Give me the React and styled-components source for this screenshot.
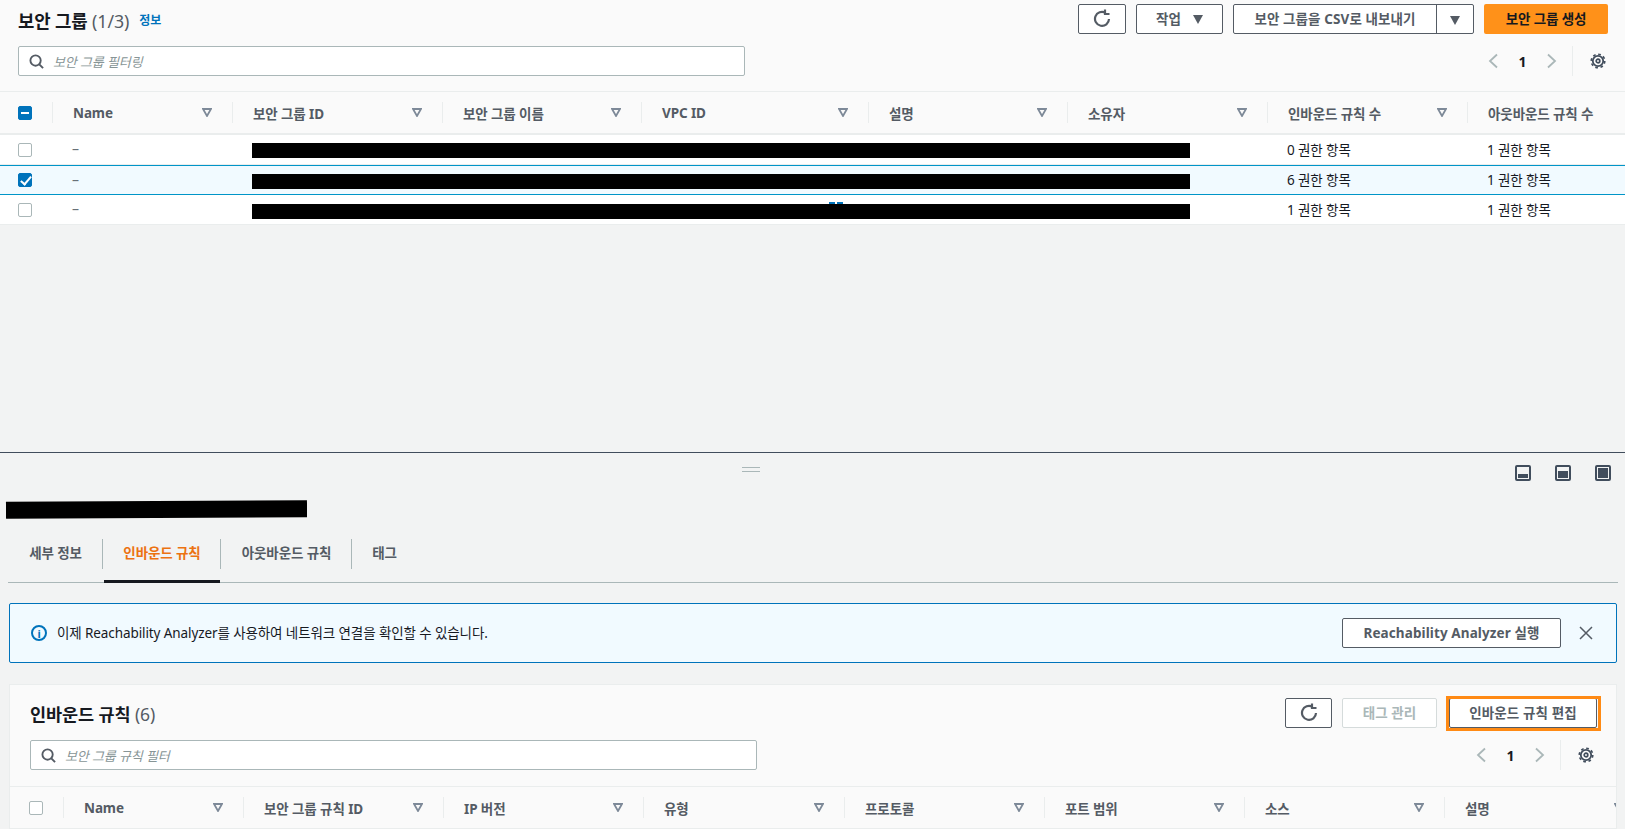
import React from 'react';
import styled, { createGlobalStyle } from 'styled-components';

const GlobalStyle = createGlobalStyle`
  html, body {
    margin: 0;
    padding: 0;
    height: 100%;
    overflow: hidden;
    background: #f2f3f3;
  }
  body {
    font-family: "Noto Sans", "Noto Sans CJK KR", sans-serif;
    font-size: 13.5px;
    letter-spacing: -0.1px;
    color: #16191f;
  }
  * { box-sizing: border-box; }
`;

const topColumns = '52px 180px 210px 199px 227px 199px 200px 200px 220px';
const bottomColumns = '53px 180px 200px 200px 201px 200px 200px 200px 200px';

const topHeads = ['Name', '보안 그룹 ID', '보안 그룹 이름', 'VPC ID', '설명', '소유자', '인바운드 규칙 수', '아웃바운드 규칙 수'];
const bottomHeads = ['Name', '보안 그룹 규칙 ID', 'IP 버전', '유형', '프로토콜', '포트 범위', '소스', '설명'];
const rows = [
  { id: 1, inbound: '0 권한 항목', outbound: '1 권한 항목' },
  { id: 2, inbound: '6 권한 항목', outbound: '1 권한 항목', selected: true },
  { id: 3, inbound: '1 권한 항목', outbound: '1 권한 항목', peek: true },
];

const SearchIcon = () => (
  <svg width="15" height="15" viewBox="0 0 16 16" fill="none" stroke="#545b64" strokeWidth="2">
    <circle cx="7" cy="7" r="5.5" />
    <path d="M11 11l4 4" />
  </svg>
);

const RefreshIcon = () => (
  <svg width="18" height="18" viewBox="0 0 18 18" fill="none" stroke="#545b64" strokeWidth="2.200">
    <path d="M16 10A7 7 0 1 1 12.500 3.800" />
    <path d="M12 0.500v4.500h4.500" />
  </svg>
);

const GearIcon = () => (
  <svg width="16" height="16" viewBox="0 0 16 16" fill="none" stroke="#414d5c">
    <circle cx="8" cy="8" r="5.200" strokeWidth="1.800" />
    <circle cx="8" cy="8" r="6.800" strokeWidth="1.600" strokeDasharray="2.700 2.640" />
    <circle cx="8" cy="8" r="1.800" strokeWidth="1.700" />
  </svg>
);

const Chevron = ({ left }) => (
  <svg width="10" height="16" viewBox="0 0 10 16" fill="none" stroke="#aab7b8" strokeWidth="1.800">
    <path d={left ? 'M9 1.500L2 8l7 6.500' : 'M1 1.500L8 8l-7 6.500'} />
  </svg>
);

const SortCaret = () => (
  <svg width="10" height="9" viewBox="0 0 10 9" fill="none" stroke="#7d8998" strokeWidth="1.800">
    <path d="M1 1h8L5 8z" />
  </svg>
);

const PaneIcon = ({ fill }) => (
  <svg width="16" height="16" viewBox="0 0 16 16">
    <rect x="1" y="1" width="14" height="14" rx="1" fill="none" stroke="#414d5c" strokeWidth="2" />
    <rect x="3" y={16 - 3 - fill} width="10" height={fill} fill="#414d5c" />
  </svg>
);

const Pagination = () => (
  <PagerWrap>
    <Chevron left />
    <PageNumber>1</PageNumber>
    <Chevron />
    <PagerDivider />
    <GearIcon />
  </PagerWrap>
);

const TableHead = ({ columns, heads, inset, checked }) => (
  <HeadRow $columns={columns}>
    <CheckCell $inset={inset}>
      <CheckBox $state={checked} />
    </CheckCell>
    {heads.map((head) => (
      <HeadCell key={head}>
        <span>{head}</span>
        <SortCaret />
      </HeadCell>
    ))}
  </HeadRow>
);

const App = () => {
  return (
    <Page>
      <GlobalStyle />
      <TopPane>
        <Header>
          <HeadingRow>
            <Title>
              보안 그룹 <Count>(1/3)</Count>
            </Title>
            <InfoLink>정보</InfoLink>
            <Actions>
              <Button $width={48}><RefreshIcon /></Button>
              <Button $width={87}>작업 <Caret /></Button>
              <SplitButton>
                <SplitLabel>보안 그룹을 CSV로 내보내기</SplitLabel>
                <SplitArrow><Caret /></SplitArrow>
              </SplitButton>
              <PrimaryButton>보안 그룹 생성</PrimaryButton>
            </Actions>
          </HeadingRow>
          <FilterRow $right={2}>
            <SearchBox $width={727}>
              <SearchIcon />
              <Placeholder>보안 그룹 필터링</Placeholder>
            </SearchBox>
            <Pagination />
          </FilterRow>
        </Header>
        <TableHead columns={topColumns} heads={topHeads} checked="mixed" />
        {rows.map((row) => (
          <Row key={row.id} $selected={row.selected}>
            <CheckCell>
              <CheckBox $state={row.selected ? 'checked' : 'empty'} />
            </CheckCell>
            <NameCell>–</NameCell>
            <Redacted $peek={row.peek} />
            <DataCell>{row.inbound}</DataCell>
            <DataCell>{row.outbound}</DataCell>
          </Row>
        ))}
      </TopPane>

      <BottomPane>
        <PaneBar>
          <DragHandle />
          <PaneIcons>
            <PaneIcon fill={4} />
            <PaneIcon fill={7} />
            <PaneIcon fill={10} />
          </PaneIcons>
        </PaneBar>
        <DetailTitle />
        <Tabs>
          <Tab $width={95}>세부 정보</Tab>
          <Tab $width={118} $active>인바운드 규칙</Tab>
          <Tab $width={131}>아웃바운드 규칙</Tab>
          <Tab $width={64} $last>태그</Tab>
        </Tabs>
        <Alert>
          <AlertIcon>i</AlertIcon>
          <AlertText>이제 Reachability Analyzer를 사용하여 네트워크 연결을 확인할 수 있습니다.</AlertText>
          <Button $width={219}>Reachability Analyzer 실행</Button>
          <CloseIcon viewBox="0 0 14 14">
            <path d="M1 1l12 12M13 1L1 13" />
          </CloseIcon>
        </Alert>
        <RulesPanel>
          <RulesHeader>
            <RulesHeading>
              <RulesTitle>
                인바운드 규칙 <Count>(6)</Count>
              </RulesTitle>
              <RulesActions>
                <Button $width={47}><RefreshIcon /></Button>
                <Button $width={95} $disabled>태그 관리</Button>
                <Highlight>
                  <Button $width={148}>인바운드 규칙 편집</Button>
                </Highlight>
              </RulesActions>
            </RulesHeading>
            <FilterRow $right={7}>
              <SearchBox $width={727}>
                <SearchIcon />
                <Placeholder>보안 그룹 규칙 필터</Placeholder>
              </SearchBox>
              <Pagination />
            </FilterRow>
          </RulesHeader>
          <TableHead columns={bottomColumns} heads={bottomHeads} checked="empty" inset />
        </RulesPanel>
      </BottomPane>
    </Page>
  );
};

export default App;

const Page = styled.div`
  width: 1625px;
  height: 829px;
  overflow: hidden;
  background: #f2f3f3;
`;

const TopPane = styled.section`
  height: 453px;
  border-bottom: 1px solid #414d5c;
`;

const Header = styled.div`
  height: 91px;
  padding: 4px 17px 0 18px;
  background: #fafafa;
`;

const HeadingRow = styled.div`
  display: flex;
  align-items: flex-start;
  height: 42px;
`;

const Title = styled.h1`
  margin: 5px 0 0;
  font-size: 17.8px;
  line-height: 24px;
  font-weight: 700;
`;

const Count = styled.span`
  font-weight: 400;
  color: #545b64;
`;

const InfoLink = styled.a`
  margin: 9px 0 0 10px;
  font-size: 12px;
  line-height: 16px;
  font-weight: 700;
  color: #0073bb;
`;

const Actions = styled.div`
  display: flex;
  gap: 10px;
  margin-left: auto;
`;

const Button = styled.button`
  display: inline-flex;
  align-items: center;
  justify-content: center;
  gap: 12px;
  width: ${({ $width }) => $width}px;
  height: 30px;
  padding: 0 0 2px;
  flex: none;
  background: #fff;
  border: 1px solid ${({ $disabled }) => ($disabled ? '#d5dbdb' : '#545b64')};
  border-radius: 2px;
  font-family: inherit;
  font-size: 13.5px;
  letter-spacing: 0.1px;
  font-weight: 700;
  color: ${({ $disabled }) => ($disabled ? '#aab7b8' : '#545b64')};
`;

const Caret = styled.i`
  width: 0;
  height: 0;
  margin-top: 2px;
  border-left: 5.500px solid transparent;
  border-right: 5.500px solid transparent;
  border-top: 9px solid #545b64;
`;

const SplitButton = styled.div`
  display: flex;
  width: 241px;
  height: 30px;
  background: #fff;
  border: 1px solid #545b64;
  border-radius: 2px;
  font-weight: 700;
  letter-spacing: 0.1px;
  color: #545b64;
`;

const SplitLabel = styled.span`
  flex: 1;
  display: flex;
  align-items: center;
  justify-content: center;
  padding-bottom: 2px;
  border-right: 1px solid #545b64;
`;

const SplitArrow = styled.span`
  width: 36px;
  display: flex;
  align-items: center;
  justify-content: center;
`;

const PrimaryButton = styled.button`
  width: 124px;
  height: 30px;
  padding: 0 0 2px;
  background: #ff9119;
  border: none;
  border-radius: 2px;
  font-family: inherit;
  font-size: 13.5px;
  letter-spacing: inherit;
  font-weight: 700;
  color: #16191f;
`;

const FilterRow = styled.div`
  display: flex;
  align-items: center;
  justify-content: space-between;
  padding-right: ${({ $right }) => $right}px;
`;

const SearchBox = styled.div`
  display: flex;
  align-items: center;
  gap: 9px;
  width: ${({ $width }) => $width}px;
  height: 30px;
  padding: 0 10px;
  background: #fff;
  border: 1px solid #aab7b8;
  border-radius: 2px;
`;

const Placeholder = styled.span`
  font-style: italic;
  font-size: 13px;
  color: #879596;
`;

const PagerWrap = styled.div`
  display: flex;
  align-items: center;
  height: 30px;
  color: #16191f;
`;

const PageNumber = styled.span`
  width: 49px;
  text-align: center;
  font-weight: 700;
  font-size: 14px;
`;

const PagerDivider = styled.span`
  width: 1px;
  height: 30px;
  margin: 0 17px 0 15px;
  background: #eaeded;
`;

const HeadRow = styled.div`
  display: grid;
  grid-template-columns: ${({ $columns }) => $columns};
  align-items: center;
  height: 44px;
  background: #fafafa;
  border-top: 1px solid #eaeded;
  border-bottom: 2px solid #eaeded;
`;

const HeadCell = styled.div`
  display: flex;
  align-items: center;
  justify-content: space-between;
  height: 21px;
  padding: 0 20px;
  border-left: 1px solid #eaeded;
  font-weight: 700;
  color: #545b64;
  white-space: nowrap;
`;

const CheckCell = styled.div`
  display: flex;
  align-items: center;
  padding-left: ${({ $inset }) => ($inset ? 19 : 18)}px;
`;

const CheckBox = styled.span`
  position: relative;
  display: block;
  width: 14px;
  height: 14px;
  border-radius: 2px;
  background: ${({ $state }) => ($state === 'empty' ? '#fff' : '#0073bb')};
  border: 1px solid ${({ $state }) => ($state === 'empty' ? '#aab7b8' : '#0073bb')};

  &::after {
    content: '';
    position: absolute;
    display: ${({ $state }) => ($state === 'empty' ? 'none' : 'block')};
    ${({ $state }) =>
      $state === 'mixed'
        ? 'left: 2px; right: 2px; top: 5px; height: 2px; background: #fff;'
        : 'left: 4px; top: 0; width: 4px; height: 9px; border: solid #fff; border-width: 0 2px 2px 0; transform: rotate(40deg);'}
  }
`;

const Row = styled.div`
  display: grid;
  grid-template-columns: 52px 180px 1035px 200px 158px;
  align-items: center;
  height: 30px;
  background: ${({ $selected }) => ($selected ? '#f1faff' : '#fff')};
  border-bottom: 1px solid ${({ $selected }) => ($selected ? '#0095c8' : '#eaeded')};
  border-top: ${({ $selected }) => ($selected ? '1px solid #0095c8' : 'none')};
`;

const NameCell = styled.div`
  padding: 0 0 2px 20px;
  font-size: 14px;
  color: #687078;
`;

const DataCell = styled.div`
  padding: 0 0 2px 20px;
  color: #16191f;
  white-space: nowrap;
`;

const Redacted = styled.div`
  position: relative;
  height: 15px;
  margin: ${({ $peek }) => ($peek ? 4 : 2)}px 77px 0 20px;
  background: #000;

  ${({ $peek }) =>
    $peek &&
    `&::before {
      content: '';
      position: absolute;
      left: 577px;
      top: -2px;
      width: 14px;
      height: 2px;
      background: repeating-linear-gradient(90deg, #0073bb 0 6px, transparent 6px 8px);
    }`}
`;

const BottomPane = styled.section`
  padding-top: 12px;
`;

const PaneBar = styled.div`
  position: relative;
  display: flex;
  justify-content: flex-end;
  padding-right: 14px;
`;

const DragHandle = styled.span`
  position: absolute;
  left: 742px;
  top: 2px;
  width: 18px;
  height: 5px;
  border-top: 1px solid #aab7b8;
  border-bottom: 1px solid #aab7b8;
`;

const PaneIcons = styled.div`
  display: flex;
  gap: 24px;
  height: 16px;
`;

const DetailTitle = styled.div`
  width: 301px;
  height: 17px;
  margin: 20px 0 0 6px;
  background: #000;
  transform: rotate(-0.25deg);
`;

const Tabs = styled.div`
  display: flex;
  align-items: stretch;
  height: 65px;
  margin: 0 7px 0 8px;
  padding-top: 21px;
  border-bottom: 1px solid #aab7b8;
`;

const Tab = styled.div`
  position: relative;
  display: flex;
  align-items: center;
  justify-content: center;
  width: ${({ $width }) => $width}px;
  height: 30px;
  padding: 0 0 5px 1px;
  font-weight: 700;
  color: ${({ $active }) => ($active ? '#ec7211' : '#545b64')};
  border-right: ${({ $last }) => ($last ? 'none' : '1px solid #aab7b8')};

  ${({ $active }) =>
    $active &&
    `&::after {
      content: '';
      position: absolute;
      left: 1px;
      right: 0;
      bottom: -14px;
      height: 3px;
      background: #16191f;
    }`}
`;

const Alert = styled.div`
  display: flex;
  align-items: center;
  height: 60px;
  margin: 20px 8px 0 9px;
  padding: 0 23px 0 21px;
  background: #f1faff;
  border: 1px solid #0073bb;
  border-radius: 2px;
`;

const AlertIcon = styled.span`
  display: flex;
  align-items: center;
  justify-content: center;
  width: 16px;
  height: 16px;
  border: 2px solid #0073bb;
  border-radius: 50%;
  font-size: 11px;
  font-weight: 700;
  color: #0073bb;
`;

const AlertText = styled.span`
  flex: 1;
  margin-left: 10px;
  padding-bottom: 2px;
`;

const CloseIcon = styled.svg`
  width: 14px;
  height: 14px;
  margin-left: 18px;
  fill: none;
  stroke: #545b64;
  stroke-width: 1.500;
`;

const RulesPanel = styled.div`
  width: 1608px;
  height: 146px;
  margin: 21px 0 0 9px;
  background: #fafafa;
  border: 1px solid #eaeded;
  border-bottom: none;
  overflow: hidden;
`;

const RulesHeader = styled.div`
  height: 101px;
  padding: 13px 15px 0 20px;
`;

const RulesHeading = styled.div`
  display: flex;
  align-items: flex-start;
  height: 42px;
`;

const RulesTitle = styled.h2`
  margin: 4px 0 0;
  font-size: 17.5px;
  line-height: 24px;
  font-weight: 700;
`;

const RulesActions = styled.div`
  display: flex;
  gap: 10px;
  margin-left: auto;
`;

const Highlight = styled.div`
  position: relative;
  width: 155px;
  height: 35px;
  margin: -2px 0 -3px -1px;
  padding: 2px 0 0 3px;

  &::after {
    content: '';
    position: absolute;
    inset: 0;
    border: 3px solid #ff8a14;
  }
`;
